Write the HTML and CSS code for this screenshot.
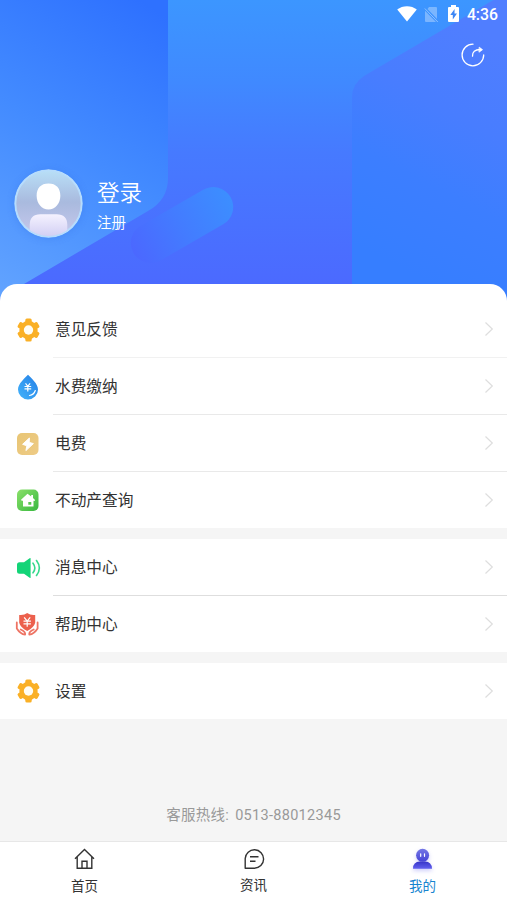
FILE: index.html
```html
<!DOCTYPE html>
<html lang="zh-CN">
<head>
<meta charset="UTF-8">
<title>我的</title>
<link rel="stylesheet" href="styles.css">
</head>
<body>
<svg class="defs" aria-hidden="true">
  <symbol id="gear" viewBox="0 0 26 26">
    <g fill="#fab026">
      <circle cx="13.500" cy="13" r="9.200"/>
      <rect x="10.300" y="1.600" width="6.400" height="22.800" rx="1.500"/>
      <rect x="10.300" y="1.600" width="6.400" height="22.800" rx="1.500" transform="rotate(60 13.500 13)"/>
      <rect x="10.300" y="1.600" width="6.400" height="22.800" rx="1.500" transform="rotate(120 13.500 13)"/>
    </g>
    <circle cx="13.500" cy="13" r="4.700" fill="#fffdf4"/>
  </symbol>
  <symbol id="chevron" viewBox="0 0 10 16"><path d="M1.500 1.500 8.300 8l-6.800 6.500" fill="none" stroke="#dedede" stroke-width="1.200"/></symbol>
</svg>
<div class="app">
  <header class="hero">
    <svg class="hero-art" viewBox="0 0 507 304" aria-hidden="true">
      <defs>
        <linearGradient id="mid" x1="0" y1="0" x2="0" y2="1"><stop offset="0" stop-color="#3c96ff"/><stop offset=".27" stop-color="#4089ff"/><stop offset=".5" stop-color="#467aff"/><stop offset=".9" stop-color="#4b6bff"/><stop offset="1" stop-color="#4b68ff"/></linearGradient>
        <linearGradient id="left" gradientUnits="userSpaceOnUse" x1="170" y1="20" x2="0" y2="285"><stop offset="0" stop-color="#2e71ff"/><stop offset=".5" stop-color="#438bff"/><stop offset="1" stop-color="#60a2ff"/></linearGradient>
        <linearGradient id="right" gradientUnits="userSpaceOnUse" x1="500" y1="40" x2="385" y2="260"><stop offset="0" stop-color="#507eff"/><stop offset=".35" stop-color="#487dff"/><stop offset=".65" stop-color="#3c7eff"/><stop offset="1" stop-color="#367eff"/></linearGradient>
        <linearGradient id="pill" x1="1" y1="0" x2="0" y2="0"><stop offset="0" stop-color="#3c8eff"/><stop offset=".5" stop-color="#437cff"/><stop offset="1" stop-color="#4b68ff"/></linearGradient>
      </defs>
      <rect width="507" height="304" fill="url(#mid)"/>
      <path d="M0 0h168v178q0 22-20 33L24 284 0 298z" fill="url(#left)"/>
      <path d="M507-8v312H352V97q0-13 12-21z" fill="url(#right)"/>
      <rect x="126" y="205" width="112" height="40" rx="20" transform="rotate(-30 182 225)" fill="url(#pill)"/>
    </svg>
    <div class="statusbar">
      <svg class="wifi" viewBox="0 0 20 16"><path d="M.2 3.600C5.500-.9 14.500-.9 19.800 3.600L10 15.600z" fill="#fff"/></svg>
      <svg class="sim" viewBox="0 0 15 17"><path d="M5 1h7q1 0 1 1v11L3.500 3zM1 4.700 12 16H2q-1 0-1-1z" fill="#fff" opacity=".32"/><path d="m.8 2.500 13 13.500" stroke="#fff" stroke-opacity=".42"/></svg>
      <svg class="battery" viewBox="0 0 11 17"><path d="M3 0h5v2h2q1 0 1 1v13q0 1-1 1H1q-1 0-1-1V3q0-1 1-1h2z" fill="#fff"/><path d="M6.600 4 2.300 10h2.500v4.500L9 8.500H6.500z" fill="#3c87f5"/></svg>
      <span class="clock">4:36</span>
    </div>
    <button class="share" aria-label="分享">
      <svg viewBox="0 0 24 24" fill="none" stroke="#fff" stroke-width="1.300" stroke-linecap="round"><path d="M12 1.200A10.800 10.800 0 1 0 22.700 12"/><path d="M11.500 13.200c-.2-4.400 2.300-6.800 8-6.700"/><path d="m18.500 4.400 3 2.300-3.200 2.300z" fill="#fff" stroke-width=".8"/></svg>
    </button>
    <div class="profile">
      <svg class="avatar" viewBox="0 0 68 68">
        <defs>
          <linearGradient id="av" x1="0" y1="0" x2="0" y2="1"><stop offset="0" stop-color="#b8dff7"/><stop offset=".48" stop-color="#a9bade"/><stop offset="1" stop-color="#c8c9ed"/></linearGradient>
          <linearGradient id="body" x1="0" y1="0" x2="0" y2="1"><stop offset="0" stop-color="#f5f2ff"/><stop offset="1" stop-color="#cfcdf3"/></linearGradient>
          <clipPath id="round"><circle cx="34" cy="34" r="32"/></clipPath>
        </defs>
        <circle cx="34" cy="34" r="32.700" fill="url(#av)" stroke="#b7dcfc" stroke-width="2"/>
        <path clip-path="url(#round)" d="M15.500 68V55q0-10.500 10.500-10.500h16q10.500 0 10.500 10.500v13z" fill="url(#body)"/>
        <path d="M34 14.300c7.600 0 11.700 4.700 11.700 12 0 7.500-5.100 13.700-11.700 13.700S22.300 33.800 22.300 26.300c0-7.300 4.100-12 11.700-12z" fill="#fff"/>
      </svg>
      <div class="account"><span class="login">登录</span><span class="register">注册</span></div>
    </div>
  </header>
  <main>
    <section class="group first">
      <div class="row"><svg class="icon"><use href="#gear"/></svg><div class="label">意见反馈</div><svg class="arrow"><use href="#chevron"/></svg></div>
      <div class="row">
        <svg class="icon" viewBox="0 0 26 26"><defs><linearGradient id="drop" x1="0" y1="1" x2="1" y2="0"><stop offset="0" stop-color="#43b3fb"/><stop offset="1" stop-color="#247fe5"/></linearGradient></defs><path d="M13 .8c3 3.200 10 9 10 14.600a10 10 0 0 1-20 0C3 9.800 10 4 13 .8z" fill="url(#drop)"/><path d="m10.500 9.300 2.300 3 2.300-3M9.500 12.500h6.700M9.500 14.900h6.700M12.800 12.500v5" stroke="#fff" stroke-width="1.200" fill="none"/><path d="M14.500 21.500q4.500-.8 5.800-5" stroke="#fff" stroke-width="1.200" stroke-linecap="round" fill="none"/></svg>
        <div class="label">水费缴纳</div><svg class="arrow"><use href="#chevron"/></svg></div>
      <div class="row">
        <svg class="icon" viewBox="0 0 26 26"><defs><linearGradient id="sand" x1="0" y1="0" x2="1" y2="1"><stop offset="0" stop-color="#e8c574"/><stop offset="1" stop-color="#eecb86"/></linearGradient></defs><rect x="2" y="2" width="21.500" height="22" rx="5" fill="url(#sand)"/><path d="M14.400 7 7.600 13.300l4.300 1.500-1 4.800 7.500-7-4.200-1.200z" fill="#fff" stroke="#fff" stroke-width="1" stroke-linejoin="round"/></svg>
        <div class="label">电费</div><svg class="arrow"><use href="#chevron"/></svg></div>
      <div class="row last">
        <svg class="icon" viewBox="0 0 26 26"><defs><linearGradient id="leaf" x1="0" y1="0" x2="1" y2="1"><stop offset="0" stop-color="#8be06a"/><stop offset="1" stop-color="#37b83f"/></linearGradient></defs><rect x="2" y="2.500" width="21.500" height="21.500" rx="5" fill="url(#leaf)"/><path fill-rule="evenodd" d="M12.500 6.800 6 12.800l.7.900H8v5.800h10.500v-5.800h1.500V13l-2-1.900V8h-1.800v1.600zM13.300 15h3v2.700h-3z" fill="#fff"/></svg>
        <div class="label">不动产查询</div><svg class="arrow"><use href="#chevron"/></svg></div>
    </section>
    <section class="group">
      <div class="row dark">
        <svg class="icon" viewBox="0 0 26 26"><path d="M4.500 7.200H9l6-4.100q.6-.3.600.5v18.800q0 .8-.6.500l-6-4.100H4.500Q2 18.800 2 16.300V9.700q0-2.500 2.500-2.500z" fill="#13d477"/><path d="M18 8.200q3.700 4.800 0 9.600M21.500 5.500q5.700 7.500 0 15" fill="none" stroke="#35d98c" stroke-width="1.600" stroke-linecap="round"/></svg>
        <div class="label">消息中心</div><svg class="arrow"><use href="#chevron"/></svg></div>
      <div class="row last">
        <svg class="icon" viewBox="0 0 26 26"><path d="M12.200 2q3.200 2.600 8 2v7.700q-1.200 4.800-8 8.200-6.800-3.400-8-8.200V4q4.800.6 8-2z" fill="#ec604d"/><path d="m9.200 6.300 3 3.800 3-3.800M8.500 10.200h7.400M8.500 12.800h7.400M12.200 10.200v5.500" fill="none" stroke="#fff" stroke-width="1.200"/><path d="M1.800 11.500v6q3.500 5.500 8.300 6.200.6-3.200-4.400-5.200M22.600 11.500v6q-3.500 5.500-8.300 6.200-.6-3.200 4.400-5.200" fill="none" stroke="#ee7464" stroke-width="1.800" stroke-linejoin="round" stroke-linecap="round"/></svg>
        <div class="label">帮助中心</div><svg class="arrow"><use href="#chevron"/></svg></div>
    </section>
    <section class="group">
      <div class="row last"><svg class="icon"><use href="#gear"/></svg><div class="label">设置</div><svg class="arrow"><use href="#chevron"/></svg></div>
    </section>
  </main>
  <p class="hotline"><span>客服热线:</span><span>0513-88012345</span></p>
  <nav class="tabs">
    <a class="tab"><svg viewBox="0 0 24 24" fill="none" stroke="#333" stroke-width="1.400"><path d="M2 11.800 11.500 2.500l9.500 9.300M4.200 9.700v11.600h14.600V9.700M9 21v-6.700h5V21"/></svg><span>首页</span></a>
    <a class="tab news"><svg viewBox="0 0 24 24" fill="none" stroke="#333" stroke-width="1.400"><path d="M3.200 21.200V11.500a9.200 9.200 0 1 1 9.200 9.700z" stroke-linejoin="round"/><path d="M8 9.700h8.500M8 14.200h5.500"/></svg><span>资讯</span></a>
    <a class="tab active"><svg viewBox="0 0 24 24"><defs><linearGradient id="person" x1="0" y1="0" x2="0" y2="1"><stop offset="0" stop-color="#7477e5"/><stop offset="1" stop-color="#4543d6"/></linearGradient><linearGradient id="torso" x1="0" y1="0" x2="0" y2="1"><stop offset="0" stop-color="#3735c8"/><stop offset="1" stop-color="#6260ef"/></linearGradient></defs><path d="M2 21.800q0-7 7-7.200h5q6.800.2 7 7.200z" fill="url(#torso)"/><circle cx="11.600" cy="8.300" r="6.500" fill="url(#person)"/><path d="M9.700 6.800v2.500M13.500 6.800v2.500" stroke="#fff" stroke-width="1.200" stroke-linecap="round"/></svg><span>我的</span></a>
  </nav>
</div>
</body>
</html>
```
FILE: styles.css
```css
* { box-sizing: border-box; }
body {
  margin: 0;
  font-family: Roboto, "Noto Sans CJK SC", sans-serif;
  color: #333;
  background: #f5f5f5;
}
svg { display: block; flex: none; }
.defs { position: absolute; width: 0; height: 0; }
.app { display: flex; flex-direction: column; width: 507px; height: 901px; overflow: hidden; }
.hero { position: relative; flex: none; height: 304px; margin-bottom: -20px; color: #fff; }
.hero-art { position: absolute; inset: 0; width: 507px; height: 304px; }
.statusbar { position: relative; display: flex; justify-content: flex-end; align-items: center; height: 28px; padding-right: 9px; }
.wifi { width: 20px; height: 16px; margin-right: 7px; }
.sim { width: 15px; height: 17px; margin-right: 9px; }
.battery { width: 11px; height: 17px; margin: -1px 8px 0 0; }
.clock { font-size: 15.800px; line-height: 28px; font-weight: 500; padding-top: 1px; }
.share { position: relative; display: block; width: 24px; height: 24px; margin: 15px 22px 0 auto; padding: 0; border: 0; background: none; }
.share svg { width: 24px; height: 24px; }
.profile { position: relative; display: flex; margin: 102px 0 0 14px; }
.avatar { width: 69px; height: 69px; border-radius: 50%; box-shadow: 0 1px 7px rgba(45, 105, 220, .25); }
.account { display: flex; flex-direction: column; padding: 8px 0 0 14px; font-weight: 350; }
.login { font-size: 22.500px; line-height: 32px; }
.register { font-size: 14.500px; line-height: 20px; margin-top: 5px; }
main { position: relative; flex: none; display: flex; flex-direction: column; gap: 11px; }
.group { background: #fff; }
.first { padding-top: 17px; border-radius: 17px 17px 0 0; }
.row { display: flex; align-items: center; height: 57px; padding-left: 15px; position: relative; }
.icon { width: 26px; height: 26px; margin-right: 12px; }
.label { flex: 1; align-self: stretch; padding-left: 2px; font-size: 15.700px; line-height: 58px; }
.row::after { content: ""; position: absolute; left: 53px; right: 0; bottom: 0; height: 1px; background: #e9e9e9; }
.row:first-child::after { background: #f1f1f1; }
.row.dark::after { background: #dedede; }
.row.last { height: 56px; }
.row.last::after { display: none; }
.arrow { width: 10px; height: 16px; margin: -1px 13px 0 0; }
.hotline { display: flex; justify-content: center; gap: 6px; margin: auto 0 15px; font-size: 14.500px; line-height: 20px; letter-spacing: .3px; color: #999; }
.tabs { flex: none; display: grid; grid-template-columns: repeat(3, 1fr); height: 60px; border-top: 1px solid #e7e7e7; background: #fff; }
.tab { display: flex; flex-direction: column; align-items: center; padding-top: 5px; font-size: 13.500px; line-height: 20px; }
.tab svg { width: 24px; height: 24px; margin-bottom: 5px; }
.news svg { margin-bottom: 4px; }
.active { color: #1684cf; }
.active svg { filter: drop-shadow(0 2px 2px rgba(93, 90, 240, .3)); }
```
